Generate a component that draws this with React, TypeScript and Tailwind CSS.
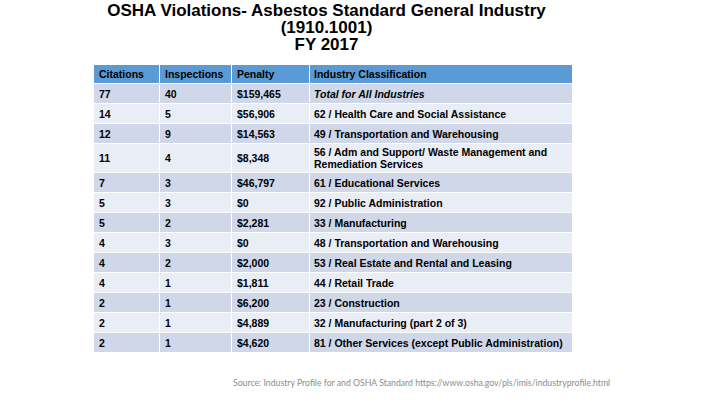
const rows: [string, string, string, string, boolean?][] = [
  ['77', '40', '$159,465', 'Total for All Industries', true],
  ['14', '5', '$56,906', '62 / Health Care and Social Assistance'],
  ['12', '9', '$14,563', '49 / Transportation and Warehousing'],
  ['11', '4', '$8,348', '56 / Adm and Support/ Waste Management and Remediation Services'],
  ['7', '3', '$46,797', '61 / Educational Services'],
  ['5', '3', '$0', '92 / Public Administration'],
  ['5', '2', '$2,281', '33 / Manufacturing'],
  ['4', '3', '$0', '48 / Transportation and Warehousing'],
  ['4', '2', '$2,000', '53 / Real Estate and Rental and Leasing'],
  ['4', '1', '$1,811', '44 / Retail Trade'],
  ['2', '1', '$6,200', '23 / Construction'],
  ['2', '1', '$4,889', '32 / Manufacturing (part 2 of 3)'],
  ['2', '1', '$4,620', '81 / Other Services (except Public Administration)'],
];

export default function App() {
  return (
    <div className="w-[720px] h-[405px] bg-white text-black font-['Liberation_Sans',Arial,sans-serif]">
      {/* Title */}
      <div className="w-[653px] pt-[2px] text-center font-bold text-[17px] leading-[17px]">
        <div>OSHA Violations- Asbestos Standard General Industry</div>
        <div>(1910.1001)</div>
        <div>FY 2017</div>
      </div>

      {/* Table */}
      <table className="ml-[93px] mt-[11px] w-[479px] table-fixed border-collapse text-[10.5px] font-bold leading-[12px]">
        <colgroup>
          <col className="w-[66px]" />
          <col className="w-[72px]" />
          <col className="w-[78px]" />
          <col className="w-[263px]" />
        </colgroup>
        <thead>
          <tr className="h-[19px] bg-[#5b9bd5]">
            <th className="border border-white px-[5px] py-0 text-left font-bold">Citations</th>
            <th className="border border-white px-[5px] py-0 text-left font-bold">Inspections</th>
            <th className="border border-white px-[5px] py-0 text-left font-bold">Penalty</th>
            <th className="border border-white px-[4px] py-0 text-left font-bold">Industry Classification</th>
          </tr>
        </thead>
        <tbody>
          {rows.map(([c, i, p, name, total], idx) => (
            <tr key={idx} className={idx % 2 === 0 ? 'h-[20px] bg-[#cfd7e9]' : 'h-[20px] bg-[#e9edf6]'}>
              <td className="border border-white px-[5px] py-[2px]">{c}</td>
              <td className="border border-white px-[5px] py-[2px]">{i}</td>
              <td className="border border-white px-[5px] py-[2px]">{p}</td>
              <td className={total ? 'border border-white px-[4px] py-[2px] italic' : 'border border-white px-[4px] py-[2px]'}>
                {name}
              </td>
            </tr>
          ))}
        </tbody>
      </table>

      {/* Source */}
      <p className="ml-[233px] mt-[25px] text-[8.7px] leading-[10px] text-[#8c8c8c] font-['Lato',sans-serif]">
        Source: Industry Profile for and OSHA Standard https://www.osha.gov/pls/imis/industryprofile.html
      </p>
    </div>
  );
}
